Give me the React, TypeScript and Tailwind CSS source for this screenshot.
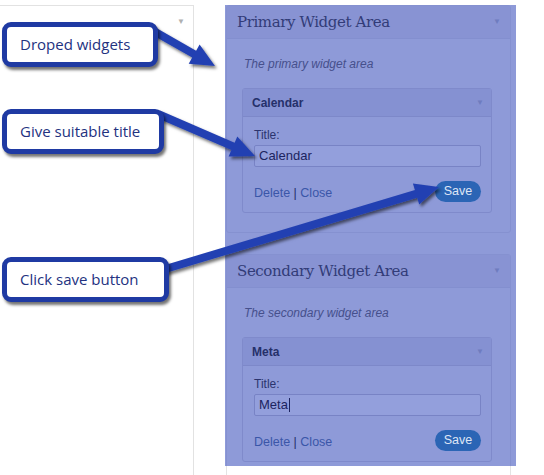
import React from "react";

type Pt = [number, number];

function arrowPoints(from: Pt, to: Pt, shaft = 8, headLen = 24, headW = 22): string {
  const dx = to[0] - from[0];
  const dy = to[1] - from[1];
  const len = Math.hypot(dx, dy);
  const ux = dx / len;
  const uy = dy / len;
  const nx = -uy;
  const ny = ux;
  const bx = to[0] - ux * headLen;
  const by = to[1] - uy * headLen;
  const s = shaft / 2;
  const h = headW / 2;
  const pts: Pt[] = [
    [from[0] + nx * s, from[1] + ny * s],
    [bx + nx * s, by + ny * s],
    [bx + nx * h, by + ny * h],
    [to[0], to[1]],
    [bx - nx * h, by - ny * h],
    [bx - nx * s, by - ny * s],
    [from[0] - nx * s, from[1] - ny * s],
  ];
  return pts.map((p) => `${p[0].toFixed(1)},${p[1].toFixed(1)}`).join(" ");
}

function Widget({ name, value, caret }: { name: string; value: string; caret?: boolean }) {
  return (
    <div className="ml-[15px] mr-[18px] rounded-[3px] border border-[#7f8acb] bg-[#8e9ad8]">
      <div className="flex h-[28px] items-center justify-between border-b border-[#7d88c9] bg-[#8591d2] pl-[9px] pr-[7px]">
        <span className="text-[12px] font-bold text-[#25306a]">{name}</span>
        <span className="text-[8px] text-[#6f7cbf]">▼</span>
      </div>
      <div className="pb-[10px] pl-[11px] pr-[10px] pt-[11px]">
        <div className="text-[12px] leading-[14px] text-[#2b346e]">Title:</div>
        <div className="mt-[3px] flex h-[22px] items-center rounded-[2px] border border-[#7883c5] bg-[#939fdc] px-[4px] text-[13px] text-[#1c2460]">
          {value}
          {caret ? <span className="ml-[1px] inline-block h-[14px] w-[1px] bg-[#1c2460]" /> : null}
        </div>
        <div className="mt-[13px] flex h-[22px] items-center justify-between">
          <span className="pt-[4px] text-[12.5px] text-[#3a56a8]">
            Delete <span className="text-[#26306a]">|</span> Close
          </span>
          <span className="flex h-[21px] w-[46px] items-center justify-center rounded-full bg-[#2b65b5] text-[12.5px] text-[#dfe6f5]">
            Save
          </span>
        </div>
      </div>
    </div>
  );
}

function Area({ title, desc, children }: { title: string; desc: string; children: React.ReactNode }) {
  return (
    <div className="ml-[1px] w-[285px] rounded-[3px] border border-[#8591d0] bg-[#8e9ad8]">
      <div className="flex h-[33px] items-center justify-between border-b border-[#838fcf] bg-[#8893d3] pl-[10px] pr-[9px]">
        <span
          className="text-[15px] text-[#323c78]"
          style={{ fontFamily: '"DejaVu Serif", "Liberation Serif", serif', letterSpacing: "-0.4px" }}
        >
          {title}
        </span>
        <span className="text-[8px] text-[#6f7cbf]">▼</span>
      </div>
      <div className="pb-[19px] pt-[17px]">
        <div className="mb-[16px] pl-[17px] text-[12px] italic leading-[16px] text-[#46508c]">{desc}</div>
        {children}
      </div>
    </div>
  );
}

function Callout({ text, w }: { text: string; w: number }) {
  return (
    <div
      className="flex h-[45px] items-center rounded-[9px] border-[5px] border-[#1f3aa3] bg-white pl-[13px] text-[15px] text-[#23327f] shadow-[2px_3px_3px_rgba(0,0,0,0.55)]"
      style={{ width: w, fontFamily: '"Open Sans", "Noto Sans", sans-serif' }}
    >
      {text}
    </div>
  );
}

export default function App() {
  return (
    <div
      className="relative flex h-[475px] w-[544px] overflow-hidden bg-white"
      style={{ fontFamily: '"Liberation Sans", Arial, sans-serif' }}
    >
      {/* left sidebar */}
      <div className="relative mt-[5px] w-[194px] border-r border-t border-[#e2e2e2]">
        <span className="absolute right-[8px] top-[10px] text-[8px] text-[#b0b0b0]">▼</span>
      </div>
      {/* right column */}
      <div className="ml-[31px] flex w-[291px] flex-col">
        <div className="mt-[5px] flex h-[461px] flex-col gap-[21px] overflow-hidden bg-[#8e9ad8]">
          <Area title="Primary Widget Area" desc="The primary widget area">
            <Widget name="Calendar" value="Calendar" />
          </Area>
          <Area title="Secondary Widget Area" desc="The secondary widget area">
            <Widget name="Meta" value="Meta" caret />
          </Area>
        </div>
        <div className="ml-[1px] w-[285px] flex-1 border-x border-[#e4e4e4]" />
      </div>

      {/* arrows */}
      <svg className="pointer-events-none absolute left-0 top-0" width="544" height="475">
        <defs>
          <filter id="sh" x="-20%" y="-20%" width="140%" height="140%">
            <feDropShadow dx="2" dy="2.5" stdDeviation="1.5" floodColor="#000" floodOpacity="0.55" />
          </filter>
        </defs>
        <g fill="#2441b2" filter="url(#sh)">
          <polygon points={arrowPoints([150, 29], [215, 66])} />
          <polygon points={arrowPoints([158, 114], [255, 156])} />
          <polygon points={arrowPoints([162, 270], [439, 187])} />
        </g>
      </svg>

      {/* callouts */}
      <div className="absolute left-[2px] top-[22px]">
        <Callout text="Droped widgets" w={156} />
      </div>
      <div className="absolute left-[2px] top-[109px]">
        <Callout text="Give suitable title" w={162} />
      </div>
      <div className="absolute left-[2px] top-[257px]">
        <Callout text="Click save button" w={167} />
      </div>
    </div>
  );
}
